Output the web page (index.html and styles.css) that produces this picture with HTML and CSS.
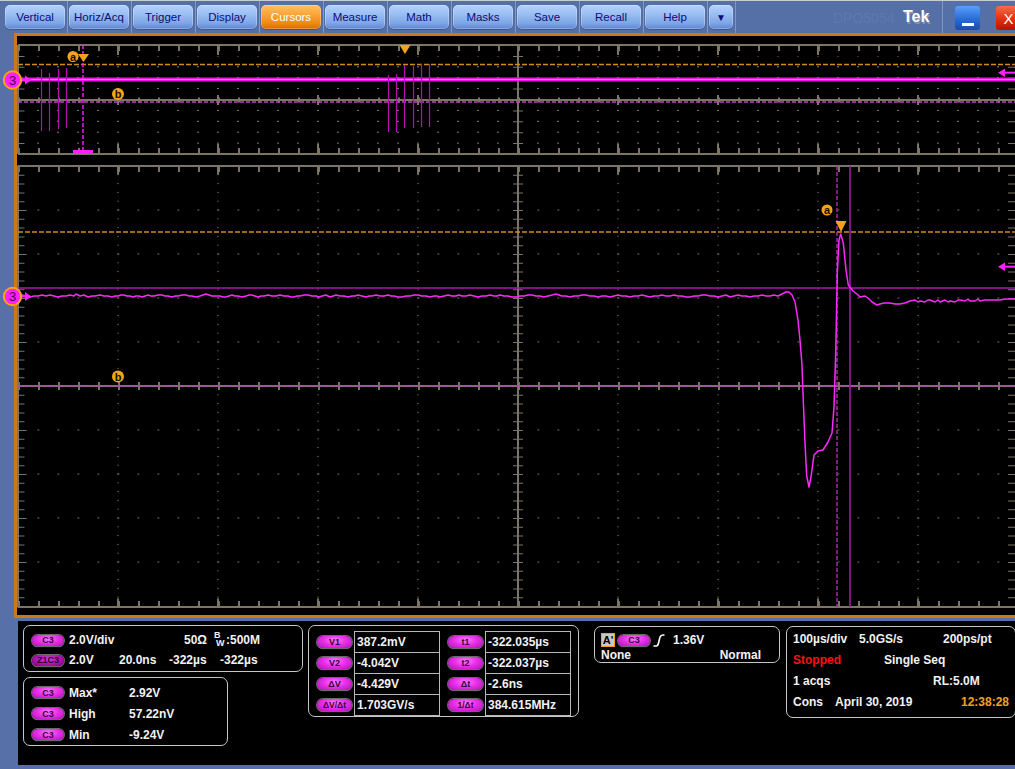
FILE: index.html
```html
<!DOCTYPE html>
<html>
<head>
<meta charset="utf-8">
<link rel="stylesheet" href="styles.css">
</head>
<body>
<header class="menubar">
  <div class="mbtn">Vertical</div><span class="sep"></span>
  <div class="mbtn">Horiz/Acq</div><span class="sep"></span>
  <div class="mbtn">Trigger</div><span class="sep"></span>
  <div class="mbtn">Display</div><span class="sep"></span>
  <div class="mbtn mbtn-on">Cursors</div><span class="sep"></span>
  <div class="mbtn">Measure</div><span class="sep"></span>
  <div class="mbtn">Math</div><span class="sep"></span>
  <div class="mbtn">Masks</div><span class="sep"></span>
  <div class="mbtn">Save</div><span class="sep"></span>
  <div class="mbtn">Recall</div><span class="sep"></span>
  <div class="mbtn">Help</div><span class="sep"></span>
  <div class="mbtn mbtn-arrow">&#9660;</div><span class="sep"></span>
  <span class="model">DPO5054</span>
  <span class="tek">Tek</span><span class="sep sep-tek"></span>
  <div class="wbtn wmin"><span class="wmin-bar"></span></div>
  <div class="wbtn wclose">X</div>
</header>

<main class="frame">
<svg class="scope" width="998" height="579" viewBox="17 36 998 579">
  <defs>
    <pattern id="dm" x="17.5" y="165.5" width="20" height="44" patternUnits="userSpaceOnUse"><rect width="1.5" height="1" fill="#9a9282"/></pattern>
    <pattern id="dmv" x="17.5" y="165.5" width="100" height="8.8" patternUnits="userSpaceOnUse"><rect width="1" height="1" fill="#9a9282"/></pattern>
    <pattern id="do" x="17" y="44.5" width="20" height="10.9" patternUnits="userSpaceOnUse"><rect width="2" height="1" fill="#8a8272"/></pattern>
  </defs>

  <!-- overview graticule -->
  <g class="grat">
    <rect x="18" y="56" width="1000" height="88" fill="url(#do)"/>
    <line x1="18" y1="45" x2="1018" y2="45" class="gl"/>
    <line x1="18" y1="154" x2="1018" y2="154" class="gl"/>
    <line x1="18" y1="100" x2="1018" y2="100" class="gl"/>
    <line x1="18" y1="45" x2="18" y2="154" class="gl"/>
    <line x1="518" y1="45" x2="518" y2="154" class="gl"/>
    <line x1="18" y1="48" x2="1018" y2="48" class="tk" stroke-width="6" stroke-dasharray="2 18"/>
    <line x1="17" y1="50" x2="1018" y2="50" class="tk" stroke-width="10" stroke-dasharray="2 98"/>
    <line x1="18" y1="151" x2="1018" y2="151" class="tk" stroke-width="6" stroke-dasharray="2 18"/>
    <line x1="17" y1="149" x2="1018" y2="149" class="tk" stroke-width="10" stroke-dasharray="2 98"/>
    <line x1="18" y1="100" x2="1018" y2="100" class="tk" stroke-width="5" stroke-dasharray="2 18"/>
    <line x1="17" y1="100" x2="1018" y2="100" class="tk" stroke-width="10" stroke-dasharray="2 98"/>
    <line x1="21" y1="45" x2="21" y2="154" class="tk" stroke-width="7" stroke-dasharray="1 9.9"/>
    <line x1="1013" y1="45" x2="1013" y2="154" class="tk" stroke-width="10" stroke-dasharray="1 9.9"/>
    <line x1="518" y1="45" x2="518" y2="154" class="tk" stroke-width="10" stroke-dasharray="1 9.9"/>
  </g>

  <!-- main graticule -->
  <g class="grat">
    <rect x="18" y="166" width="1000" height="441" fill="url(#dm)"/>
    <rect x="18" y="166" width="1000" height="441" fill="url(#dmv)"/>
    <line x1="18" y1="166" x2="1018" y2="166" class="gl"/>
    <line x1="18" y1="607" x2="1018" y2="607" class="gl"/>
    <line x1="18" y1="166" x2="18" y2="607" class="gl"/>
    <line x1="518" y1="166" x2="518" y2="607" class="gl"/>
    <line x1="18" y1="386" x2="1018" y2="386" class="gl"/>
    <line x1="18" y1="169" x2="1018" y2="169" class="tk" stroke-width="6" stroke-dasharray="2 18"/>
    <line x1="17" y1="170" x2="1018" y2="170" class="tk" stroke-width="9" stroke-dasharray="2 98"/>
    <line x1="18" y1="604" x2="1018" y2="604" class="tk" stroke-width="6" stroke-dasharray="2 18"/>
    <line x1="17" y1="603" x2="1018" y2="603" class="tk" stroke-width="9" stroke-dasharray="2 98"/>
    <line x1="18" y1="386" x2="1018" y2="386" class="tk" stroke-width="8" stroke-dasharray="2 18"/>
    <line x1="21" y1="166" x2="21" y2="607" class="tk" stroke-width="7" stroke-dasharray="1 7.8"/>
    <line x1="22" y1="166" x2="22" y2="607" class="tk" stroke-width="9" stroke-dasharray="1 43"/>
    <line x1="1013" y1="166" x2="1013" y2="607" class="tk" stroke-width="10" stroke-dasharray="1 7.8"/>
    <line x1="518" y1="166" x2="518" y2="607" class="tk" stroke-width="10" stroke-dasharray="1 7.8"/>
  </g>

  <!-- overview traces & cursors -->
  <line x1="18" y1="64.5" x2="1018" y2="64.5" class="cur-a"/>
  <line x1="18" y1="102" x2="1018" y2="102" class="cur-b"/>
  <rect x="18" y="77.5" width="1000" height="4" fill="#e818e8"/>
  <line x1="18" y1="79.5" x2="1018" y2="79.5" stroke="#ff70ff" stroke-width="1"/>
  <g stroke="#b010b8" stroke-width="1.2">
    <line x1="41.5" y1="69" x2="41.5" y2="131"/>
    <line x1="49.5" y1="73" x2="49.5" y2="131"/>
    <line x1="58.5" y1="69" x2="58.5" y2="129"/>
    <line x1="66.5" y1="68" x2="66.5" y2="128"/>
    <line x1="388.5" y1="75" x2="388.5" y2="132"/>
    <line x1="396.5" y1="74" x2="396.5" y2="132"/>
    <line x1="404.5" y1="65" x2="404.5" y2="128"/>
    <line x1="413.5" y1="66" x2="413.5" y2="128"/>
    <line x1="421.5" y1="64" x2="421.5" y2="127"/>
    <line x1="429.5" y1="64" x2="429.5" y2="127"/>
  </g>
  <line x1="83" y1="45" x2="83" y2="151" stroke="#f020f0" stroke-width="1.5" stroke-dasharray="4 2"/>
  <rect x="73" y="150" width="20" height="4" fill="#ff20ff"/>
  <polygon points="399.5,45 410.5,45 405,54" fill="#f7a21b"/>
  <polygon points="78,54 89,54 83.5,62" fill="#f7a21b"/>
  <circle cx="73" cy="56.5" r="5.5" fill="#f4a414"/>
  <text x="73" y="60.5" class="lbl">a</text>
  <circle cx="118" cy="94" r="6" fill="#f4a414"/>
  <text x="118" y="98" class="lbl">b</text>
  <polygon points="1005,68.5 998,72.7 1005,77" fill="#ff20ff"/>
  <line x1="1004" y1="72.7" x2="1015" y2="72.7" stroke="#ff20ff" stroke-width="2"/>

  <!-- main traces & cursors -->
  <line x1="18" y1="232" x2="1018" y2="232" class="cur-a"/>
  <line x1="18" y1="386" x2="1018" y2="386" class="cur-b"/>
  <line x1="18" y1="288" x2="1018" y2="288" stroke="#a818a8" stroke-width="1.6"/>
  <line x1="837" y1="166" x2="837" y2="607" stroke="#a828a8" stroke-width="1.5" stroke-dasharray="4 2"/>
  <line x1="850" y1="166" x2="850" y2="607" stroke="#a018a8" stroke-width="1.6"/>
  <polyline fill="none" stroke="#ff28ff" stroke-width="1.5" stroke-linejoin="round" points="18,296 22,295 26,296 30,297 34,296 38,296 42,295 46,296 50,295 54,296 58,297 62,296 66,296 70,295 74,296 76,294 80,296 84,295 88,297 92,296 95,296 100,295 104,296 108,296 112,297 115,296 118,296 121,295 124,295 127,296 130,296 133,297 136,296 139,296 142,297 145,296 148,295 151,296 154,296 158,295 162,295 165,296 168,296 172,297 175,296 178,296 182,295 186,295 189,296 192,296 196,297 200,296 203,295 206,294 209,295 212,296 216,296 220,296 223,297 226,297 229,296 232,295 235,296 238,296 242,297 246,296 249,295 252,295 255,296 258,297 261,296 264,296 268,295 272,296 276,296 280,295 284,296 288,296 291,297 294,297 297,296 300,296 304,295 308,295 312,296 316,296 319,297 322,296 326,295 330,297 333,296 336,295 340,296 344,296 348,297 352,296 355,296 358,295 362,296 366,297 369,296 372,296 376,295 380,296 384,296 388,295 391,296 394,296 398,297 402,297 406,296 410,296 414,295 418,295 422,296 426,296 430,297 434,296 437,296 440,297 444,296 448,295 452,296 456,296 459,295 462,296 466,296 470,295 474,296 478,297 482,296 486,296 490,295 494,296 497,296 500,295 504,296 508,296 512,297 516,297 520,296 524,296 528,295 532,295 536,296 540,296 544,297 548,296 552,295 556,294 559,295 562,296 566,296 570,297 574,296 578,296 582,295 586,295 590,296 594,296 598,297 602,296 606,296 610,297 614,296 618,295 622,296 626,296 630,297 634,296 638,296 642,295 646,296 650,297 654,296 658,296 662,295 666,296 670,296 674,295 678,296 682,296 686,297 690,297 694,296 698,296 702,295 706,295 710,296 714,296 718,297 722,296 726,295 730,297 734,296 738,295 742,296 746,296 750,297 754,296 758,296 762,295 766,296 770,296 774,295 778,296 782,294 786,292 789,292 792,295 795,302 798,320 800,340 802,365 803,393 805,443 806.7,476 809,487 811,477 814,455 818,451 823,450 828,442 832,433 834,407 835.7,353 837.3,273 839,240 840.7,234 843.3,243 846,270 848.3,285 853,291 857,294 860,297 865,296 868,298 872,302 877,305 880,304 884,303 890,303 895,304 900,304 905,303 910,301 915,300 918,302 920,301 925,302 928,300 930,300 935,302 938,300 940,302 945,300 948,302 950,301 955,302 958,300 960,300 965,301 968,299 970,301 975,301 978,299 980,301 985,300 990,300 995,300 1000,300 1005,299 1010,299 1015,299"/>
  <polygon points="835.5,221 846.5,221 841,232" fill="#f7a21b"/>
  <circle cx="827" cy="210" r="5.5" fill="#f4a414"/>
  <text x="827" y="214" class="lbl">a</text>
  <circle cx="118" cy="376.5" r="6" fill="#f4a414"/>
  <text x="118" y="380.5" class="lbl">b</text>
  <polygon points="1005,262.5 998,266.7 1005,271" fill="#ff20ff"/>
  <line x1="1004" y1="266.7" x2="1015" y2="266.7" stroke="#ff20ff" stroke-width="2"/>

  <!-- channel markers -->
  <polygon points="25,75.5 31.5,80 25,84.5" fill="#ff20ff"/>
  <line x1="20" y1="80" x2="28" y2="80" stroke="#ff20ff" stroke-width="2"/>
  <circle cx="12.5" cy="80" r="8.7" fill="#ff20ff" stroke="#f7a414" stroke-width="2"/>
  <text x="12.5" y="84.5" class="chn">3</text>
  <polygon points="25,292 31.5,296.5 25,301" fill="#ff20ff"/>
  <line x1="20" y1="296.5" x2="28" y2="296.5" stroke="#ff20ff" stroke-width="2"/>
  <circle cx="12.5" cy="296.5" r="8.7" fill="#ff20ff" stroke="#f7a414" stroke-width="2"/>
  <text x="12.5" y="301" class="chn">3</text>
</svg>
</main>

<section class="readouts">
  <div class="col">
    <div class="panel p-chan">
      <div class="row">
        <span class="pill">C3</span>
        <span class="w115">2.0V/div</span>
        <span class="w30">50&Omega;</span>
        <span class="bw"><span class="bw-b">B</span><span class="bw-w">W</span></span><span>:500M</span>
      </div>
      <div class="row">
        <span class="pill pill-dark">Z1C3</span>
        <span class="w50">2.0V</span>
        <span class="w50">20.0ns</span>
        <span class="w51">-322&micro;s</span>
        <span>-322&micro;s</span>
      </div>
    </div>
    <div class="panel p-meas">
      <div class="row r21"><span class="pill">C3</span><span class="w60">Max*</span><span>2.92V</span></div>
      <div class="row r21"><span class="pill">C3</span><span class="w60">High</span><span>57.22nV</span></div>
      <div class="row r21"><span class="pill">C3</span><span class="w60">Min</span><span>-9.24V</span></div>
    </div>
  </div>

  <div class="panel p-curs">
    <div class="ctab">
      <div class="pcol">
        <span class="pill cpill">V1</span>
        <span class="pill cpill">V2</span>
        <span class="pill cpill">&Delta;V</span>
        <span class="pill cpill small">&Delta;V/&Delta;t</span>
      </div>
      <div class="vals">
        <div>387.2mV</div>
        <div>-4.042V</div>
        <div>-4.429V</div>
        <div>1.703GV/s</div>
      </div>
    </div>
    <div class="ctab">
      <div class="pcol">
        <span class="pill cpill">t1</span>
        <span class="pill cpill">t2</span>
        <span class="pill cpill">&Delta;t</span>
        <span class="pill cpill small">1/&Delta;t</span>
      </div>
      <div class="vals">
        <div>-322.035&micro;s</div>
        <div>-322.037&micro;s</div>
        <div>-2.6ns</div>
        <div>384.615MHz</div>
      </div>
    </div>
  </div>

  <div class="panel p-trig">
    <div class="row trow1">
      <span class="abox">A'</span>
      <span class="pill">C3</span>
      <svg class="ramp" width="12" height="13" viewBox="0 0 12 13"><path d="M0.5 12 L3.5 12 Q5 12 5.8 8 L7 3 Q7.8 1 10 1 L11.5 1" fill="none" stroke="#fff" stroke-width="1.6"/></svg>
      <span>1.36V</span>
    </div>
    <div class="row trow2"><span>None</span><span>Normal</span></div>
  </div>

  <div class="panel p-horiz">
    <div class="row r21"><span class="w66">100&micro;s/div</span><span class="w84">5.0GS/s</span><span>200ps/pt</span></div>
    <div class="row r21"><span class="w91 red">Stopped</span><span>Single Seq</span></div>
    <div class="row r21"><span class="w140">1 acqs</span><span>RL:5.0M</span></div>
    <div class="row r21"><span class="w42">Cons</span><span class="w126">April 30, 2019</span><span class="orange">12:38:28</span></div>
  </div>
</section>
</body>
</html>
```

FILE: styles.css
```css
* { box-sizing: border-box; }
html, body { margin: 0; padding: 0; }
body {
  width: 1015px;
  height: 769px;
  overflow: hidden;
  background: #5771a8;
  font-family: "Liberation Sans", Arial, sans-serif;
}

/* ---------- menu bar ---------- */
.menubar {
  display: flex;
  align-items: flex-start;
  height: 33px;
  border-top: 1px solid #c9ccd2;
  padding-left: 5px;
  background: #5570a6;
  overflow: hidden;
}
.menubar > * { flex: none; }
.mbtn {
  margin-top: 4px;
  width: 60px;
  height: 24px;
  border-radius: 5px;
  display: flex;
  align-items: center;
  justify-content: center;
  font-size: 11.5px;
  color: #0c0c78;
  background: linear-gradient(#b4d2fb 0%, #9cc0f4 35%, #7fa6e6 75%, #5d86d0 100%);
  box-shadow: inset 0 0 0 1px rgba(255,255,255,0.25), 0 1px 0 #3d5790;
}
.mbtn-on {
  color: #fff;
  background: linear-gradient(#ffc060 0%, #fba43a 40%, #f08a12 75%, #d86e00 100%);
}
.mbtn-arrow { width: 24px; font-size: 10px; }
.sep {
  align-self: stretch;
  width: 1px;
  margin: 0 1px 0 2px;
  background: #8096c4;
}
.model {
  margin-left: 96px;
  width: 70px;
  margin-top: 9px;
  font-size: 14px;
  color: #5d78b0;
}
.tek {
  width: 37px;
  margin-top: 7px;
  font-size: 16px;
  font-weight: bold;
  color: #fff;
  text-shadow: 1px 2px 0 #8b94a6;
}
.sep-tek { margin-right: 12px; }
.wbtn {
  margin-top: 5px;
  width: 25px;
  height: 24px;
  border-radius: 3px;
  display: flex;
  align-items: center;
  justify-content: center;
}
.wmin {
  background: linear-gradient(#5aa0f8, #2a6ad8 55%, #1a4ca8);
}
.wmin-bar {
  width: 12px;
  height: 3px;
  margin-top: 12px;
  background: #fff;
}
.wclose {
  margin-left: 16px;
  background: linear-gradient(#f86a48, #e03010 55%, #b01800);
  color: #fff;
  font-size: 15px;
}

/* ---------- scope frame ---------- */
.frame {
  display: block;
  margin-left: 14px;
  height: 585px;
  border: 3px solid #cc7a16;
  border-right: 0;
  background: #000;
}
.scope { display: block; overflow: visible; }
.gl { stroke: #7c7465; stroke-width: 2; }
.tk { stroke: #7c7465; }
.cur-a { stroke: #d48a1c; stroke-width: 1.5; stroke-dasharray: 5 2; }
.cur-b { stroke: #c040c0; stroke-width: 1.5; stroke-dasharray: 4 2; }
.lbl {
  font-family: "Liberation Sans", Arial, sans-serif;
  font-size: 11px;
  font-weight: bold;
  fill: #1a0c00;
  text-anchor: middle;
}
.chn {
  font-family: "Liberation Sans", Arial, sans-serif;
  font-size: 13px;
  fill: #4a0050;
  text-anchor: middle;
}

/* ---------- readouts ---------- */
.readouts {
  display: flex;
  align-items: flex-start;
  margin-top: 3px;
  margin-left: 18px;
  height: 144px;
  background: #000;
  padding: 4px 0 0 5px;
  color: #f2f2f2;
  font-size: 12px;
  font-weight: bold;
}
.readouts > * { flex: none; }
.col { display: flex; flex-direction: column; gap: 5px; width: 280px; }
.panel {
  border: 1px solid #c6c6c6;
  border-radius: 7px;
}
.row { display: flex; align-items: center; white-space: nowrap; }
.r21 { height: 21px; }

.p-chan { width: 280px; height: 47px; padding: 4px 0 0 8px; }
.p-chan .row { height: 20px; }
.p-chan .pill { margin-right: 5px; }
.p-meas { width: 205px; height: 69px; padding: 4px 0 0 8px; }
.p-meas .pill { margin-right: 5px; }

.w115 { width: 115px; }
.w30 { width: 30px; }
.w50 { width: 50px; }
.w51 { width: 51px; }
.w60 { width: 60px; }
.w66 { width: 66px; }
.w84 { width: 84px; }
.w91 { width: 91px; }
.w140 { width: 140px; }
.w42 { width: 42px; }
.w126 { width: 126px; }

.bw { display: inline-block; position: relative; width: 12px; height: 14px; font-size: 9px; line-height: 8px; }
.bw-b { position: absolute; left: 0; top: -2px; }
.bw-w { position: absolute; left: 2px; top: 6px; }

.pill {
  display: inline-flex;
  align-items: center;
  justify-content: center;
  width: 32px;
  height: 11px;
  border-radius: 6px;
  background: radial-gradient(ellipse at 50% 35%, #ff7cff 0%, #e830e8 45%, #b010b8 100%);
  box-shadow: 0 0 0 1px #6a6a6a, 0 1px 1px #999;
  color: #3a0040;
  font-size: 9px;
  font-weight: bold;
  flex: none;
}
.pill-dark {
  background: radial-gradient(ellipse at 50% 35%, #d040d0 0%, #a810a8 60%, #700070 100%);
  color: #2a0030;
}

.p-curs {
  width: 271px;
  height: 92px;
  margin-left: 5px;
  padding: 5px 0 0 8px;
  display: flex;
  gap: 8px;
}
.ctab { display: flex; gap: 2px; }
.pcol { display: flex; flex-direction: column; padding-top: 1px; }
.cpill { width: 35px; height: 12px; margin: 4px 0 5px; }
.cpill.small { font-size: 8.5px; }
.vals {
  width: 86px;
  border: 1px solid #b9b9b9;
}
.vals div {
  height: 20px;
  line-height: 20px;
  padding-left: 2px;
}
.vals div + div { border-top: 1px solid #b9b9b9; height: 21px; }

.p-trig {
  width: 186px;
  height: 37px;
  margin: 1px 0 0 15px;
  padding: 5px 18px 0 6px;
}
.trow1 { height: 16px; gap: 3px; }
.trow2 { height: 14px; justify-content: space-between; }
.abox {
  width: 14px;
  height: 14px;
  border: 1px solid #f0a010;
  background: #c8c8c8;
  color: #000;
  font-size: 11px;
  display: flex;
  align-items: center;
  justify-content: center;
}
.ramp { margin: 0 5px 0 0; }

.p-horiz {
  width: 230px;
  height: 92px;
  margin: 1px 0 0 6px;
  padding: 1px 0 0 6px;
}
.red { color: #ff1010; }
.orange { color: #f4a020; }
```
